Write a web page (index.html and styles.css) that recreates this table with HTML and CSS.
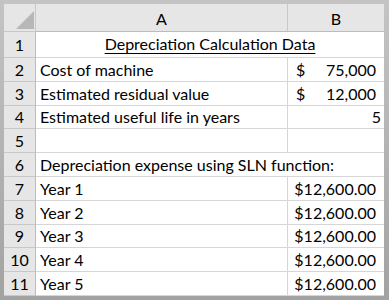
FILE: index.html
```html
<!DOCTYPE html>
<html>
<head>
<meta charset="utf-8">
<link rel="stylesheet" href="styles.css">
</head>
<body>
<div class="frame">
  <div class="sheet">
    <div class="corner"><span class="tri"></span></div>
    <div class="colhead">A</div>
    <div class="colhead last">B</div>

    <div class="rownum">1</div>
    <div class="cell merged title"><span class="u">Depreciation Calculation Data</span></div>

    <div class="rownum">2</div>
    <div class="cell">Cost of machine</div>
    <div class="cell acct last"><span>$</span><span>75,000</span></div>

    <div class="rownum">3</div>
    <div class="cell">Estimated residual value</div>
    <div class="cell acct last"><span>$</span><span>12,000</span></div>

    <div class="rownum">4</div>
    <div class="cell">Estimated useful life in years</div>
    <div class="cell num plain last">5</div>

    <div class="rownum">5</div>
    <div class="cell"></div>
    <div class="cell last"></div>

    <div class="rownum">6</div>
    <div class="cell merged">Depreciation expense using SLN function:</div>

    <div class="rownum">7</div>
    <div class="cell">Year 1</div>
    <div class="cell num last">$12,600.00</div>

    <div class="rownum">8</div>
    <div class="cell">Year 2</div>
    <div class="cell num last">$12,600.00</div>

    <div class="rownum">9</div>
    <div class="cell">Year 3</div>
    <div class="cell num last">$12,600.00</div>

    <div class="rownum">10</div>
    <div class="cell">Year 4</div>
    <div class="cell num last">$12,600.00</div>

    <div class="rownum">11</div>
    <div class="cell">Year 5</div>
    <div class="cell num last">$12,600.00</div>
  </div>
</div>
</body>
</html>
```

FILE: styles.css
```css
html, body {
  margin: 0;
  padding: 0;
  background: #a9a9a9;
}
.frame {
  width: 389px;
  height: 300px;
  box-sizing: border-box;
  padding: 4px 5px 4px 4px;
  background: linear-gradient(#c4c4c4, #a2a2a2);
}
.sheet {
  display: grid;
  grid-template-columns: 32px 252px 96px;
  grid-template-rows: 28px 26px repeat(10, 23.8px);
  background: #ffffff;
  font-family: Lato, "Open Sans", sans-serif;
  font-size: 16px;
  color: #000000;
  line-height: 1;
}
.corner {
  background: #e6e6e6;
  border-right: 1px solid #c8c8c8;
  border-bottom: 1px solid #c8c8c8;
  box-sizing: border-box;
  display: flex;
  align-items: flex-end;
  justify-content: flex-end;
  padding: 0 1px 2px 0;
}
.tri {
  width: 0;
  height: 0;
  border-left: 18px solid transparent;
  border-bottom: 18px solid #b7b7b7;
}
.colhead {
  background: #e6e6e6;
  border-right: 1px solid #c8c8c8;
  border-bottom: 1px solid #bcbcbc;
  box-sizing: border-box;
  display: flex;
  align-items: center;
  justify-content: center;
  padding-top: 2px;
}
.rownum {
  background: #e6e6e6;
  border-right: 1px solid #bcbcbc;
  border-bottom: 1px solid #c8c8c8;
  box-sizing: border-box;
  display: flex;
  align-items: center;
  justify-content: center;
  padding-top: 1px;
}
.cell {
  border-right: 1px solid #d6d6d6;
  border-bottom: 1px solid #d6d6d6;
  box-sizing: border-box;
  display: flex;
  align-items: center;
  padding: 1px 4px 0;
  white-space: nowrap;
}
.last {
  border-right: none;
}
.merged {
  grid-column: 2 / 4;
  border-right: none;
}
.title {
  justify-content: center;
  padding-bottom: 2px;
}
.u {
  text-decoration: underline;
  text-underline-offset: 3px;
}
.num {
  justify-content: flex-end;
  padding-right: 8px;
}
.plain {
  padding-right: 3px;
}
.acct {
  justify-content: space-between;
  padding-left: 8px;
  padding-right: 8px;
}
```
